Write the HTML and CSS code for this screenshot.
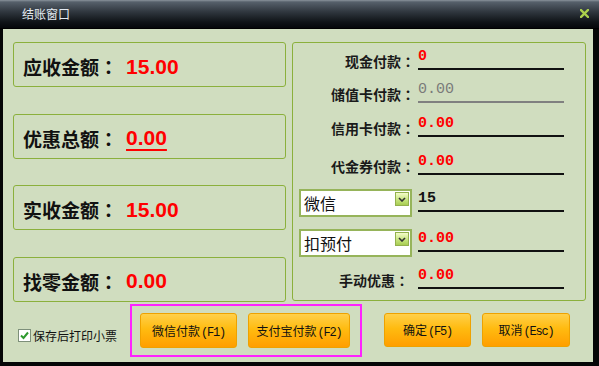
FILE: index.html
```html
<!DOCTYPE html>
<html lang="zh-CN">
<head>
    <meta charset="UTF-8">
    <title>结账窗口</title>
    <link rel="stylesheet" href="styles.css">
</head>
<body>
    <div class="window">
        <div class="titlebar">
            <span class="title">结账窗口</span>
            <svg class="close" width="9" height="9" viewBox="0 0 9 9">
                <path d="M1 1 L8 8 M8 1 L1 8" stroke="#aad04c" stroke-width="2.4" stroke-linecap="square"/>
            </svg>
        </div>

        <div class="content">
            <div class="main">
                <!-- 左侧金额汇总 -->
                <div class="totals">
                    <div class="total-box"><span class="total-label">应收金额<span class="colon" lang="ja">：</span></span><span class="total-value">15.00</span></div>
                    <div class="total-box"><span class="total-label">优惠总额<span class="colon" lang="ja">：</span></span><span class="total-value underline">0.00</span></div>
                    <div class="total-box"><span class="total-label">实收金额<span class="colon" lang="ja">：</span></span><span class="total-value">15.00</span></div>
                    <div class="total-box"><span class="total-label">找零金额<span class="colon" lang="ja">：</span></span><span class="total-value">0.00</span></div>
                </div>

                <!-- 右侧付款方式 -->
                <div class="payments">
                    <div class="pay-row">
                        <span class="pay-label">现金付款<span class="colon" lang="ja">：</span></span>
                        <span class="pay-input">0</span>
                    </div>
                    <div class="pay-row">
                        <span class="pay-label">储值卡付款<span class="colon" lang="ja">：</span></span>
                        <span class="pay-input disabled">0.00</span>
                    </div>
                    <div class="pay-row">
                        <span class="pay-label">信用卡付款<span class="colon" lang="ja">：</span></span>
                        <span class="pay-input">0.00</span>
                    </div>
                    <div class="pay-row">
                        <span class="pay-label">代金券付款<span class="colon" lang="ja">：</span></span>
                        <span class="pay-input">0.00</span>
                    </div>
                    <div class="pay-row">
                        <div class="select"><span>微信</span><span class="select-arrow"><svg width="8" height="5" viewBox="0 0 8 5"><path d="M1 1 L4 4 L7 1" fill="none" stroke="#333" stroke-width="1.6"/></svg></span></div>
                        <span class="pay-input dark">15</span>
                    </div>
                    <div class="pay-row">
                        <div class="select"><span>扣预付</span><span class="select-arrow"><svg width="8" height="5" viewBox="0 0 8 5"><path d="M1 1 L4 4 L7 1" fill="none" stroke="#333" stroke-width="1.6"/></svg></span></div>
                        <span class="pay-input">0.00</span>
                    </div>
                    <div class="pay-row">
                        <span class="pay-label short">手动优惠<span class="colon" lang="ja">：</span></span>
                        <span class="pay-input">0.00</span>
                    </div>
                </div>
            </div>

            <div class="footer">
                <label class="print-option">
                    <span class="checkbox"><svg width="11" height="11" viewBox="0 0 11 11"><path d="M2 5.5 L4.5 8 L9 2.5" fill="none" stroke="#2e9a2e" stroke-width="2"/></svg></span>
                    保存后打印小票
                </label>
                <div class="quick-pay">
                    <button class="btn btn-wechat">微信付款<span class="key">(F1)</span></button>
                    <button class="btn btn-alipay">支付宝付款<span class="key">(F2)</span></button>
                </div>
                <button class="btn btn-confirm">确定<span class="key">(F5)</span></button>
                <button class="btn btn-cancel">取消<span class="key">(Esc)</span></button>
            </div>
        </div>
    </div>
</body>
</html>
```

FILE: styles.css
```css
body {
    margin: 0;
    font-family: "Noto Sans CJK SC", "Noto Sans", sans-serif;
    background-color: black;
}

.window {
    width: 599px;
    height: 366px;
    background-color: #050607;
    overflow: hidden;
}

.titlebar {
    height: 28px;
    border-bottom: 1px solid #000;
    background: linear-gradient(#8a939c 0, #56606b 2px, #2f363e 12px, #0f1317 22px, #05070a 28px);
    display: flex;
    align-items: center;
    padding: 0 10px 0 22px;
}

.title {
    font-size: 12px;
    color: #e4ebf2;
    margin-top: -1px;
}

.close {
    margin-left: auto;
    margin-top: -1px;
}

.content {
    margin: 0 6px 0 3px;
    height: 333px;
    padding: 13px 7px 0 10px;
    box-sizing: border-box;
    background-color: #d0ddbf;
}

.main {
    display: flex;
    gap: 6px;
    height: 260px;
}

/* 中文冒号居中显示 */
.colon {
    font-family: "Noto Sans CJK JP", "Noto Sans CJK SC", sans-serif;
}

.totals {
    width: 273px;
    display: flex;
    flex-direction: column;
    justify-content: space-between;
}

.total-box {
    height: 45px;
    box-sizing: border-box;
    border: 1px solid #8bb03c;
    border-radius: 3px;
    display: flex;
    align-items: center;
    padding: 4px 0 0 9px;
}

.total-label {
    font-size: 19px;
    font-weight: bold;
    color: #111;
}

.total-value {
    font-family: "Liberation Sans", Arial, sans-serif;
    font-size: 21px;
    font-weight: bold;
    color: #ff0000;
    margin-left: 8px;
}

.total-value.underline {
    text-decoration: underline;
    text-decoration-thickness: 2px;
    text-underline-offset: 4px;
}

.payments {
    width: 294px;
    height: 259px;
    box-sizing: border-box;
    border: 1px solid #8bb03c;
    border-radius: 3px;
    display: grid;
    grid-template-rows: 27px 33px 34px 38px 37px 40px 37px;
    align-content: start;
}

.pay-row {
    display: flex;
    align-items: flex-end;
    padding-left: 6px;
}

.pay-label {
    width: 116px;
    margin-right: 3px;
    text-align: right;
    font-size: 14px;
    font-weight: bold;
    color: #1a1a1a;
    line-height: 16px;
    padding-bottom: 1px;
}

.pay-label.short {
    width: 110px;
    margin-right: 9px;
}

.pay-input {
    width: 146px;
    height: 22px;
    box-sizing: border-box;
    border-bottom: 2px solid #111;
    font-family: "Liberation Mono", monospace;
    font-size: 15px;
    font-weight: bold;
    line-height: 16px;
    color: #ff0000;
    padding-top: 1px;
}

.pay-input.disabled {
    color: #7a7a7a;
    font-weight: normal;
    border-bottom-color: #808080;
}

.pay-input.dark {
    color: #111;
}

.select {
    width: 113px;
    height: 28px;
    box-sizing: border-box;
    margin: 0 6px -5px 0;
    border: 2px solid #96b45a;
    background-color: white;
    display: flex;
    align-items: flex-start;
    font-size: 16px;
    line-height: 24px;
    color: #111;
    padding-left: 3px;
}

.select-arrow {
    margin: 1px 1px 0 auto;
    width: 14px;
    height: 14px;
    box-sizing: border-box;
    border: 1px solid #93b04e;
    background: linear-gradient(#f4fcc8, #c4e27a 60%, #a8cc52);
    display: flex;
    align-items: center;
    justify-content: center;
}

.footer {
    height: 57px;
    display: flex;
    align-items: center;
}

.print-option {
    width: 117px;
    box-sizing: border-box;
    padding: 9px 0 0 5px;
    display: flex;
    align-items: center;
    font-size: 12px;
    color: #111;
}

.checkbox {
    width: 13px;
    height: 13px;
    box-sizing: border-box;
    border: 1px solid #7d8f7a;
    background-color: white;
    margin-right: 2px;
    display: flex;
    align-items: center;
    justify-content: center;
}

.quick-pay {
    width: 232px;
    height: 53px;
    box-sizing: border-box;
    border: 2px solid #ff22ff;
    display: flex;
    align-items: center;
    gap: 11px;
    padding-left: 8px;
}

.btn {
    height: 35px;
    border: 1px solid #eea200;
    border-radius: 3px;
    background: linear-gradient(#ffd04a, #ffbb10 45%, #ff9e00);
    font-family: "Noto Sans CJK SC", sans-serif;
    font-size: 12px;
    color: #111;
    padding: 0;
    cursor: pointer;
}

.key {
    font-family: "Liberation Mono", monospace;
    font-size: 12px;
    letter-spacing: -1.2px;
    margin-left: 1px;
}

.btn-wechat {
    width: 97px;
}

.btn-alipay {
    width: 102px;
}

.btn-confirm {
    width: 87px;
    height: 34px;
    margin: -1px 0 0 22px;
}

.btn-cancel {
    width: 88px;
    height: 34px;
    margin: -1px 0 0 11px;
}
```
